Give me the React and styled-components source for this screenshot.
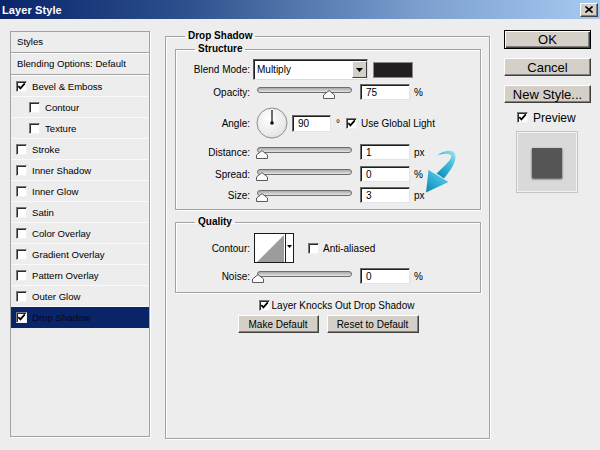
import React from 'react';
import styled, { createGlobalStyle } from 'styled-components';

const GlobalStyle = createGlobalStyle`
  html, body {
    margin: 0;
    padding: 0;
    background: #ededed;
  }
  body {
    font-family: "Liberation Sans", Arial, sans-serif;
    font-size: 10px;
    color: #000;
  }
  * { box-sizing: border-box; }
`;

const styleItems = [
  { label: 'Bevel & Emboss', checked: true },
  { label: 'Contour', indent: true },
  { label: 'Texture', indent: true },
  { label: 'Stroke' },
  { label: 'Inner Shadow' },
  { label: 'Inner Glow' },
  { label: 'Satin' },
  { label: 'Color Overlay' },
  { label: 'Gradient Overlay' },
  { label: 'Pattern Overlay' },
  { label: 'Outer Glow' },
  { label: 'Drop Shadow', checked: true, selected: true },
];

const Check = ({ checked }) => (
  <CheckBox>
    {checked && (
      <svg width="9" height="9" viewBox="0 0 9 9">
        <path d="M1.3 4.2 L3.4 6.4 L7.8 1.4" fill="none" stroke="#000" strokeWidth="1.7" />
      </svg>
    )}
  </CheckBox>
);

const Slider = ({ pos }) => (
  <SliderWrap>
    <Track />
    <Thumb style={{ left: pos - 6 }} viewBox="0 0 12 9" width="12" height="9">
      <path d="M0.5 8.5 L0.5 5 L6 0.6 L11.5 5 L11.5 8.5 Z" fill="#fbfbfb" stroke="#5a5a5a" />
    </Thumb>
  </SliderWrap>
);

const SliderRow = ({ label, pos, value, unit, top }) => (
  <Row $h={16} $mt={top}>
    <Label>{label}</Label>
    <Slider pos={pos} />
    <Field $w={50}>{value}</Field>
    <Unit>{unit}</Unit>
  </Row>
);

const App = () => {
  return (
    <>
      <GlobalStyle />
      <Window>
        <TitleBar>
          <Title>Layer Style</Title>
          <CloseButton>
            <svg width="8" height="7" viewBox="0 0 8 7">
              <path d="M0.5 0.5 L7.5 6.5 M7.5 0.5 L0.5 6.5" stroke="#000" strokeWidth="1.6" />
            </svg>
          </CloseButton>
        </TitleBar>

        <Body>
          <Sidebar>
            <HeaderRow>Styles</HeaderRow>
            <HeaderRow>Blending Options: Default</HeaderRow>
            {styleItems.map((item) => (
              <SideItem key={item.label} $indent={item.indent} $selected={item.selected}>
                <Check checked={item.checked} />
                <span>{item.label}</span>
              </SideItem>
            ))}
          </Sidebar>

          <MainGroup>
            <Legend>Drop Shadow</Legend>
            <MainInner>
              <SubGroup $mt={3} $pb={6}>
                <Legend>Structure</Legend>
                <Row $h={21} $mt={5}>
                  <Label>Blend Mode:</Label>
                  <Select>
                    <SelectText>Multiply</SelectText>
                    <DropButton>
                      <svg width="7" height="4" viewBox="0 0 7 4">
                        <path d="M0 0 H7 L3.5 4 Z" fill="#000" />
                      </svg>
                    </DropButton>
                  </Select>
                  <Swatch />
                </Row>
                <SliderRow label="Opacity:" pos={76} value="75" unit="%" top={4} />
                <Row $h={32} $mt={7}>
                  <Label>Angle:</Label>
                  <Dial width="32" height="32" viewBox="0 0 32 32">
                    <defs>
                      <radialGradient id="dialFill" cx="40%" cy="35%" r="70%">
                        <stop offset="0%" stopColor="#ffffff" />
                        <stop offset="100%" stopColor="#e2e2e2" />
                      </radialGradient>
                    </defs>
                    <circle cx="16" cy="16" r="15" fill="url(#dialFill)" stroke="#8c8c8c" />
                    <line x1="16" y1="16" x2="16" y2="3" stroke="#222" strokeWidth="1.3" />
                    <circle cx="16" cy="16" r="1.8" fill="#111" />
                  </Dial>
                  <Field $w={39} $h={17} $ml={4}>90</Field>
                  <Unit $ml={5}>°</Unit>
                  <CheckLabel $ml={6}>
                    <Check checked />
                    <span>Use Global Light</span>
                  </CheckLabel>
                </Row>
                <SliderGroup>
                  <SliderRow label="Distance:" pos={9} value="1" unit="px" top={0} />
                  <SliderRow label="Spread:" pos={9} value="0" unit="%" top={6} />
                  <SliderRow label="Size:" pos={9} value="3" unit="px" top={5} />
                  <Pointer width="40" height="52" viewBox="0 0 40 52">
                    <defs>
                      <linearGradient id="arrowFill" x1="0.9" y1="0" x2="0.1" y2="1">
                        <stop offset="0%" stopColor="#9fe2f2" />
                        <stop offset="35%" stopColor="#45bfe0" />
                        <stop offset="100%" stopColor="#0d8bb6" />
                      </linearGradient>
                    </defs>
                    <path
                      d="M17 10.5 C24 5, 35 3.5, 35.5 11 C36 18, 30 26, 24 33.5 L16.5 28.5 C22.5 22.5, 30.5 16, 31.2 12 C31.8 8, 24 8, 17 10.5 Z"
                      fill="url(#arrowFill)"
                    />
                    <path d="M6 47.5 L8.5 25 L28.5 37 Z" fill="url(#arrowFill)" />
                  </Pointer>
                </SliderGroup>
              </SubGroup>

              <SubGroup $mt={7} $pb={8}>
                <Legend>Quality</Legend>
                <Row $h={30} $mt={6}>
                  <Label>Contour:</Label>
                  <ContourBox>
                    <svg width="30" height="30" viewBox="0 0 30 30">
                      <rect x="0" y="0" width="30" height="30" fill="#fff" />
                      <path d="M1 29 L29 1 L29 29 Z" fill="#9c9c9c" />
                    </svg>
                    <ContourArrow>
                      <svg width="5" height="3" viewBox="0 0 5 3">
                        <path d="M0 0 H5 L2.5 3 Z" fill="#000" />
                      </svg>
                    </ContourArrow>
                  </ContourBox>
                  <CheckLabel $ml={14}>
                    <Check />
                    <span>Anti-aliased</span>
                  </CheckLabel>
                </Row>
                <SliderRow label="Noise:" pos={5} value="0" unit="%" top={5} />
              </SubGroup>

              <KnockRow>
                <CheckLabel $gap={2}>
                  <Check checked />
                  <span>Layer Knocks Out Drop Shadow</span>
                </CheckLabel>
              </KnockRow>
              <ButtonRow>
                <PushButton $w={81}>Make Default</PushButton>
                <PushButton $w={92}>Reset to Default</PushButton>
              </ButtonRow>
            </MainInner>
          </MainGroup>

          <RightColumn>
            <DialogButton $default>OK</DialogButton>
            <DialogButton>Cancel</DialogButton>
            <DialogButton>New Style...</DialogButton>
            <PreviewToggle>
              <Check checked />
              <span>Preview</span>
            </PreviewToggle>
            <PreviewBox>
              <PreviewSquare />
            </PreviewBox>
          </RightColumn>
        </Body>
      </Window>
    </>
  );
};

// Styled Components
const Window = styled.div`
  width: 600px;
  height: 450px;
  overflow: hidden;
  display: flex;
  flex-direction: column;
  background: #ededed;
`;

const TitleBar = styled.div`
  height: 19px;
  flex: none;
  display: flex;
  align-items: center;
  justify-content: space-between;
  padding: 0 2px 0 2px;
  background: linear-gradient(90deg, #0a246a 0%, #2c4f8c 30%, #7c9fcf 70%, #a6caf0 100%);
`;

const Title = styled.div`
  color: #fff;
  font-weight: 700;
  font-size: 11px;
  letter-spacing: 0.1px;
`;

const CloseButton = styled.div`
  width: 18px;
  height: 14px;
  display: flex;
  align-items: center;
  justify-content: center;
  background: #d4d0c8;
  border: 1px solid;
  border-color: #ffffff #404040 #404040 #ffffff;
  box-shadow: inset -1px -1px 0 #808080;
`;

const Body = styled.div`
  flex: 1;
  display: flex;
  align-items: flex-start;
  padding: 12px 0 0 10px;
`;

const Sidebar = styled.div`
  width: 140px;
  height: 406px;
  flex: none;
  border: 1px solid #a3a3a3;
  box-shadow: 1px 1px 0 #ffffff;
  display: flex;
  flex-direction: column;
  font-size: 9.6px;
`;

const HeaderRow = styled.div`
  height: 21px;
  line-height: 20px;
  padding-left: 6px;
  border-bottom: 1px solid #a3a3a3;
  box-shadow: 0 1px 0 #ffffff;
  margin-bottom: 1px;
`;

const SideItem = styled.div`
  height: 21px;
  display: flex;
  align-items: center;
  gap: 5px;
  padding-left: ${(p) => (p.$indent ? 18 : 5)}px;
  border-bottom: 1px solid ${(p) => (p.$selected ? '#0a246a' : '#fafafa')};
  background: ${(p) => (p.$selected ? '#0a246a' : 'transparent')};
  color: ${(p) => (p.$selected ? '#05081c' : '#000')};
`;

const CheckBox = styled.span`
  width: 11px;
  height: 11px;
  flex: none;
  display: inline-flex;
  align-items: center;
  justify-content: center;
  background: #fff;
  border: 1px solid;
  border-color: #7a7a7a #f2f2f2 #f2f2f2 #7a7a7a;
  box-shadow: inset 1px 1px 0 #2b2b2b;
`;

const MainGroup = styled.fieldset`
  width: 325px;
  height: 408px;
  flex: none;
  margin: 0 0 0 15px;
  padding: 0;
  min-width: 0;
  border: 1px solid #a3a3a3;
  box-shadow: 1px 1px 0 #ffffff, inset 1px 1px 0 #ffffff;
`;

const Legend = styled.legend`
  margin-left: 19px;
  padding: 0 3px;
  font-weight: 700;
  font-size: 10px;
  line-height: 10px;
`;

const MainInner = styled.div`
  display: flex;
  flex-direction: column;
  padding: 0 8px 0 9px;
`;

const SubGroup = styled.fieldset`
  margin: ${(p) => p.$mt}px 0 0 0;
  padding: 0 0 ${(p) => p.$pb}px 0;
  min-width: 0;
  border: 1px solid #a3a3a3;
  box-shadow: 1px 1px 0 #ffffff, inset 1px 1px 0 #ffffff;
  display: flex;
  flex-direction: column;
`;

const Row = styled.div`
  height: ${(p) => p.$h}px;
  margin-top: ${(p) => p.$mt || 0}px;
  display: flex;
  align-items: center;
`;

const Label = styled.div`
  width: 74px;
  margin-right: 3px;
  flex: none;
  text-align: right;
`;

const Select = styled.div`
  width: 115px;
  height: 21px;
  display: flex;
  align-items: stretch;
  background: #fff;
  border: 1px solid;
  border-color: #5a5a5a #dcdcdc #dcdcdc #5a5a5a;
  box-shadow: inset 1px 1px 0 #1f1f1f;
`;

const SelectText = styled.div`
  flex: 1;
  display: flex;
  align-items: center;
  padding-left: 3px;
`;

const DropButton = styled.div`
  width: 15px;
  margin: 1px 0 1px 0;
  display: flex;
  align-items: center;
  justify-content: center;
  background: #d4d0c8;
  border: 1px solid;
  border-color: #ffffff #404040 #404040 #ffffff;
`;

const Swatch = styled.div`
  width: 40px;
  height: 16px;
  margin-left: 5px;
  background: #231f20;
  border: 1px solid #8a8a8a;
`;

const SliderWrap = styled.div`
  width: 101px;
  height: 16px;
  flex: none;
  position: relative;
`;

const Track = styled.div`
  margin: 3px 0 0 4px;
  width: 95px;
  height: 6px;
  border: 1px solid #6e6e6e;
  border-radius: 3px;
  background: linear-gradient(#a9a9a9, #e4e4e4);
`;

const Thumb = styled.svg`
  position: absolute;
  top: 6px;
`;

const Field = styled.div`
  width: ${(p) => p.$w}px;
  height: ${(p) => p.$h || 16}px;
  margin-left: ${(p) => p.$ml || 6}px;
  flex: none;
  display: flex;
  align-items: center;
  padding-left: 5px;
  background: #fff;
  border: 1px solid;
  border-color: #6a6a6a #e4e4e4 #e4e4e4 #6a6a6a;
  box-shadow: inset 1px 1px 0 #1f1f1f;
`;

const Unit = styled.span`
  margin-left: ${(p) => p.$ml || 4}px;
`;

const Dial = styled.svg`
  margin-left: 3px;
  flex: none;
`;

const CheckLabel = styled.div`
  display: flex;
  align-items: center;
  gap: ${(p) => (p.$gap !== undefined ? p.$gap : 4)}px;
  margin-left: ${(p) => p.$ml || 0}px;
`;

const SliderGroup = styled.div`
  position: relative;
  margin-top: 5px;
  display: flex;
  flex-direction: column;
`;

const Pointer = styled.svg`
  position: absolute;
  left: 244px;
  top: 1px;
`;

const ContourBox = styled.div`
  width: 40px;
  height: 30px;
  margin-left: 1px;
  display: flex;
  border: 1px solid #1a1a1a;
  background: #fff;
  overflow: hidden;
`;

const ContourArrow = styled.div`
  flex: 1;
  display: flex;
  align-items: center;
  justify-content: center;
  border-left: 1px solid #1a1a1a;
  padding-bottom: 4px;
`;

const KnockRow = styled.div`
  margin-top: 6px;
  height: 12px;
  display: flex;
  justify-content: center;
  padding-left: 17px;
`;

const ButtonRow = styled.div`
  margin-top: 4px;
  display: flex;
  justify-content: center;
  gap: 8px;
`;

const PushButton = styled.div`
  width: ${(p) => p.$w}px;
  height: 18px;
  display: flex;
  align-items: center;
  justify-content: center;
  background: #d4d0c8;
  border: 1px solid;
  border-color: #ffffff #404040 #404040 #ffffff;
  box-shadow: inset -1px -1px 0 #808080;
`;

const RightColumn = styled.div`
  width: 87px;
  margin: -1px 0 0 14px;
  display: flex;
  flex-direction: column;
`;

const DialogButton = styled.div`
  height: ${(p) => (p.$default ? 19 : 18)}px;
  margin-top: ${(p) => (p.$default ? 0 : 9)}px;
  display: flex;
  align-items: center;
  justify-content: center;
  font-size: 13px;
  background: #d4d0c8;
  border: 1px solid;
  border-color: ${(p) => (p.$default ? '#000' : '#ffffff #404040 #404040 #ffffff')};
  box-shadow: ${(p) =>
    p.$default
      ? 'inset 1px 1px 0 #ffffff, inset -1px -1px 0 #404040, inset -2px -2px 0 #808080'
      : 'inset -1px -1px 0 #808080'};
`;

const PreviewToggle = styled.div`
  margin: 9px 0 0 13px;
  height: 11px;
  display: flex;
  align-items: center;
  gap: 5px;
  font-size: 12px;
`;

const PreviewBox = styled.div`
  width: 62px;
  height: 62px;
  margin: 8px 0 0 12px;
  display: flex;
  align-items: center;
  justify-content: center;
  background: #d9d9d9;
  border: 1px solid #c4c4c4;
  box-shadow: inset 0 0 0 1px #f2f2f2;
`;

const PreviewSquare = styled.div`
  width: 30px;
  height: 30px;
  margin-top: 1px;
  background: #555555;
  box-shadow: 0 1px 2px rgba(0, 0, 0, 0.7);
`;

export default App;
